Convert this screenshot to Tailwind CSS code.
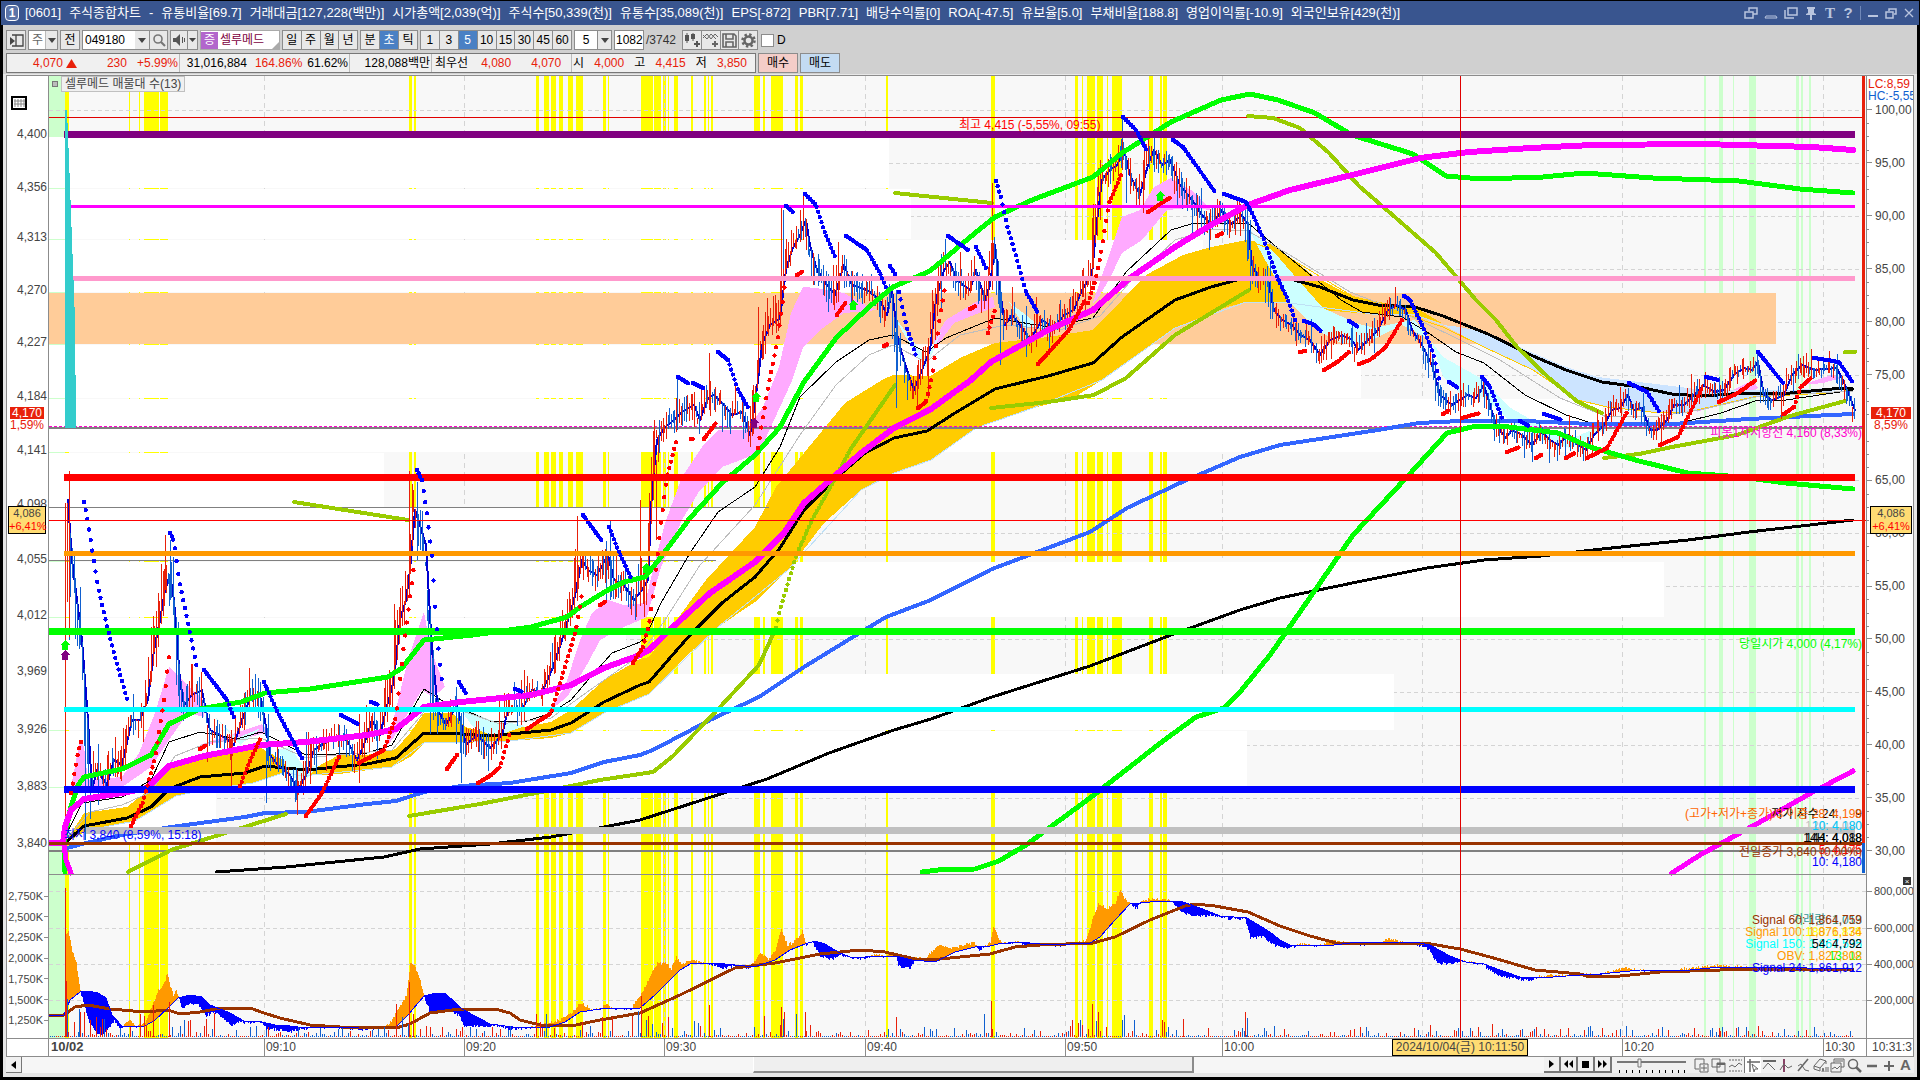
<!DOCTYPE html>
<html lang="ko">
<head>
    <meta charset="UTF-8">
    <meta name="viewport" content="width=device-width, initial-scale=1.0">
    <title>[0601] 주식종합차트</title>
    <script src="https://cdn.jsdelivr.net/npm/@tailwindcss/browser@4"></script>
</head>
<body class="bg-black h-screen overflow-hidden flex flex-col pt-px pr-px pb-[3px] text-[12px] leading-[14px] text-black font-['Liberation_Sans','Noto_Sans_CJK_KR',sans-serif]">

    <!-- Title bar -->
    <header class="h-6 shrink-0 bg-[#39558f] text-white flex items-center pl-1 pr-1 ml-px">
        <span class="w-[14px] h-4 border border-white rounded-sm font-bold text-center leading-[14px] bg-[#5b74a8]">1</span>
        <h1 class="pl-[6px] flex gap-2 text-[13px] whitespace-nowrap">
            <span>[0601]</span><span>주식종합차트</span><span>-</span><span>유통비율[69.7]</span><span>거래대금[127,228(백만)]</span><span>시가총액[2,039(억)]</span><span>주식수[50,339(천)]</span><span>유통수[35,089(천)]</span><span>EPS[-872]</span><span>PBR[7.71]</span><span>배당수익률[0]</span><span>ROA[-47.5]</span><span>유보율[5.0]</span><span>부채비율[188.8]</span><span>영업이익률[-10.9]</span><span>외국인보유[429(천)]</span>
        </h1>
        <div class="ml-auto flex items-center gap-[6px] text-[#b9c5df]">
            <button aria-label="새 창"><svg width="14" height="14" fill="none" stroke="currentColor" stroke-width="1.5"><path d="M5 5V2h8v6H9M1 6h8v6H1z"/></svg></button>
            <button aria-label="내리기"><svg width="14" height="14" fill="none" stroke="currentColor"><path d="M2 10h10l1 2H1z"/></svg></button>
            <button aria-label="복사"><svg width="14" height="14" fill="none" stroke="currentColor" stroke-width="1.5"><path d="M4 2h9v7H4zM1 4v8h9"/></svg></button>
            <button aria-label="고정"><svg width="14" height="14" fill="currentColor"><path d="M3 1h8v2h-1v4l2 1v1H8v5H6V9H2V8l2-1V3H3z"/></svg></button>
            <button aria-label="글꼴" class="font-bold text-[15px] w-3 font-['Liberation_Serif',serif]">T</button>
            <button aria-label="도움말" class="font-bold text-[15px] w-3">?</button>
            <span class="w-px h-[14px] bg-[#7088b8]"></span>
            <button aria-label="최소화"><svg width="12" height="14" fill="currentColor"><path d="M1 9h10v2H1z"/></svg></button>
            <button aria-label="이전 크기"><svg width="12" height="14" fill="none" stroke="currentColor" stroke-width="1.5"><path d="M4 5V3h7v5H9M1 6h7v6H1z"/></svg></button>
            <button aria-label="닫기"><svg width="12" height="14" fill="none" stroke="currentColor" stroke-width="1.3"><path d="M2 3l8 8M10 3l-8 8"/></svg></button>
        </div>
    </header>

    <div class="grow min-h-0 ml-[3px] mr-[2px] bg-[#e6e6e6] flex flex-col">
        <div class="bg-[#d0d0d0] pt-[5px] pb-px pl-[3px] flex flex-col gap-[3px] border-b border-[#e8e8e8]">
            <!-- Toolbar -->
            <div class="flex h-5 gap-[2px] items-stretch [&_button]:border-[#8c8c8c] [&_button]:text-center">
                <button aria-label="목록" class="w-5 border bg-[#e8e8e8] flex items-center justify-center"><svg width="15" height="15" fill="none" stroke="#444" stroke-width="1.3"><path d="M3 2h11v11H3M7 2v11"/><path d="M1 4l5 4-5 4z" fill="#444" stroke="none"/></svg></button>
                <button class="w-[30px] border bg-white flex items-center justify-between pl-[3px] text-[#666]">주<span class="w-3 h-full bg-[#e8e8e8] border-l border-[#bbb] flex items-center justify-center"><svg width="8" height="5" fill="#444"><path d="M0 0h8L4 5z"/></svg></span></button>
                <button class="w-5 border bg-[#e8e8e8]">전</button>
                <div class="flex border border-[#8c8c8c] w-[86px] bg-white">
                    <input aria-label="종목코드" value="049180" class="w-0 grow pl-[2px]">
                    <button aria-label="종목 목록" class="w-[14px] bg-[#e8e8e8] flex items-center justify-center"><svg width="8" height="5" fill="#444"><path d="M0 0h8L4 5z"/></svg></button>
                    <button aria-label="검색" class="w-[18px] border-l bg-[#e8e8e8] flex items-center justify-center"><svg width="14" height="14" fill="none" stroke="#777" stroke-width="1.6"><circle cx="6" cy="6" r="4"/><path d="M9 9l4 4" stroke-width="2.2"/></svg></button>
                </div>
                <div class="flex border border-[#8c8c8c] w-7 bg-[#e8e8e8]">
                    <button aria-label="소리" class="grow flex items-center justify-center"><svg width="15" height="14" fill="#555"><path d="M1 5h3l4-4v12L4 9H1z"/><path d="M10 4h1v6h-1zM12 5h1v4h-1z"/></svg></button>
                    <button aria-label="소리 설정" class="w-[10px] border-l flex items-center justify-center"><svg width="7" height="4" fill="#444"><path d="M0 0h7L3.500 4z"/></svg></button>
                </div>
                <div class="w-20 bg-white border border-[#aaa] flex items-center relative">
                    <span class="w-[17px] h-[17px] bg-[#b266cc] text-white text-center leading-[17px]">증</span>
                    <span class="pl-[2px] text-[#800040]">셀루메드</span>
                    <svg class="absolute right-0 bottom-0" width="7" height="7" fill="#aaa"><path d="M7 0v7H0z"/></svg>
                </div>
                <div class="flex border border-[#8c8c8c] divide-x divide-[#8c8c8c] bg-[#e8e8e8] w-[76px]"><button class="flex-1">일</button><button class="flex-1">주</button><button class="flex-1">월</button><button class="flex-1">년</button></div>
                <div class="flex border border-[#8c8c8c] divide-x divide-[#8c8c8c] bg-[#e8e8e8] w-[58px]"><button class="flex-1">분</button><button class="flex-1 bg-[#4a80c4] text-white">초</button><button class="flex-1">틱</button></div>
                <div class="flex border border-[#8c8c8c] divide-x divide-[#8c8c8c] bg-[#e8e8e8] w-[152px]"><button class="flex-1">1</button><button class="flex-1">3</button><button class="flex-1 bg-[#4a80c4] text-white">5</button><button class="flex-1">10</button><button class="flex-1">15</button><button class="flex-1">30</button><button class="flex-1">45</button><button class="flex-1">60</button></div>
                <div class="flex border border-[#8c8c8c] w-[38px] bg-white">
                    <input aria-label="간격" value="5" class="w-0 grow text-center">
                    <button aria-label="간격 목록" class="w-[14px] border-l bg-[#e8e8e8] flex items-center justify-center"><svg width="8" height="5" fill="#444"><path d="M0 0h8L4 5z"/></svg></button>
                </div>
                <input aria-label="봉 개수" value="1082" class="w-[30px] border border-[#8c8c8c] bg-white pl-px">
                <span class="w-[34px] leading-5 text-[#333]">/3742</span>
                <div class="flex border border-[#8c8c8c] divide-x divide-[#8c8c8c] bg-[#e8e8e8] w-[76px] [&_button]:flex [&_button]:items-center [&_button]:justify-center">
                    <button aria-label="봉 추가" class="flex-1"><svg class="shrink-0" width="16" height="16" fill="#555"><path d="M1 3h4v6H1zM2.500 1h1v10h-1zM7 2h4v5H7zM8.500 1h1v8h-1zM12 9h2v2h2v2h-2v2h-2v-2h-2v-2h2z"/></svg></button>
                    <button aria-label="지표 추가" class="flex-1"><svg class="shrink-0" width="16" height="16" fill="none" stroke="#666"><path d="M0 6l4-4 4 5 4-5 3 3M0 3l4 4 4-5 5 5"/><path d="M12 9v6M9 12h6" stroke-width="2"/></svg></button>
                    <button aria-label="저장" class="flex-1"><svg class="shrink-0" width="15" height="15" fill="none" stroke="#666" stroke-width="1.6"><path d="M1 1h11l2 2v11H1zM4 1v5h7V1M4 14V9h7v5"/></svg></button>
                    <button aria-label="설정" class="flex-1"><svg class="shrink-0" width="15" height="15" fill="none" stroke="#666"><circle cx="7.500" cy="7.500" r="4" stroke-width="2.500"/><circle cx="7.500" cy="7.500" r="6" stroke-width="2.500" stroke-dasharray="2.400 2.300"/></svg></button>
                </div>
                <label class="flex items-center gap-[3px] pl-px"><input type="checkbox" class="appearance-none size-[13px] bg-white border border-[#8c8c8c]">D</label>
            </div>
            <!-- Quote line -->
            <div class="flex h-5 gap-[2px] leading-[18px] whitespace-nowrap">
                <div class="w-[750px] border border-[#777] bg-[#f0f0f0] flex text-[#e8200a] divide-x divide-[#bbb]">
                    <div class="w-[173px] flex justify-end items-center gap-[10px] pr-px"><span class="flex items-center gap-[3px] pr-5">4,070<svg width="11" height="9" fill="#e8200a"><path d="M5.500 0L11 9H0z"/></svg></span><span>230</span><span>+5.99%</span></div>
                    <div class="w-[170px] flex justify-end gap-[5px] pr-px"><span class="text-black pr-[3px]">31,016,884</span><span>164.86%</span><span class="text-black">61.62%</span></div>
                    <div class="w-[82px] text-right text-black pr-px">128,088백만</div>
                    <div class="w-[140px] flex pl-[3px] gap-[13px]"><span class="text-black">최우선</span><span class="pr-[7px]">4,080</span><span>4,070</span></div>
                    <div class="grow flex justify-between pl-px pr-[8px]"><span class="text-black">시</span><span>4,000</span><span class="text-black">고</span><span>4,415</span><span class="text-black">저</span><span>3,850</span></div>
                </div>
                <button class="w-10 border border-[#8c8c8c] bg-[#f4cdc8]">매수</button>
                <button class="w-10 border border-[#8c8c8c] bg-[#c3dbf2]">매도</button>
            </div>
        </div>

        <!-- Chart -->
        <main class="grow min-h-0 ml-[3px] mr-[3px] bg-white border border-[#8c8c8c] text-[#444] grid grid-cols-[42px_1fr_47px] grid-rows-[1fr_18px]">
            <div id="leftAxis" class="relative border-r border-[#8c8c8c] overflow-hidden">
                <svg class="absolute left-1 top-5" width="16" height="14" fill="none" stroke="#333"><path d="M1 1h14v12H1z" stroke-width="2" stroke="#000"/><path d="M4 3v8M7 3v8M10 3v8M13 3v8M3 5h11M3 8h11" stroke="#888"/></svg>
            </div>
            <div id="plotBox" class="relative overflow-hidden">
                <svg id="plot" class="absolute inset-0 size-full" viewBox="49 76 1817 962" preserveAspectRatio="none" fill="none" shape-rendering="crispEdges"></svg>
                <div class="absolute left-[3px] top-0 flex items-center gap-[3px]"><span class="size-[6px] border border-[#777] bg-[#bbb]"></span><span class="border border-[#c0c0c0] bg-[#f0f0f0] px-[3px]">셀루메드 매물대 수(13)</span></div>
            </div>
            <div id="rightAxis" class="relative border-l border-[#8c8c8c] overflow-hidden whitespace-nowrap"></div>
            <div class="border-t border-r border-[#8c8c8c]"></div>
            <div id="timeAxis" class="relative border-t border-[#8c8c8c] leading-4"></div>
            <div class="border-t border-l border-[#8c8c8c] pl-[5px] leading-4 overflow-hidden whitespace-nowrap">10:31:3</div>
        </main>

        <!-- Scroll and drawing tools -->
        <footer class="h-4 mb-1 ml-[3px] mr-[3px] flex items-stretch bg-[#f0f0f0] [&_svg]:shrink-0">
            <button aria-label="왼쪽" class="w-4 bg-[#f0f0f0] border-r border-b border-[#777] flex items-center justify-center"><svg width="5" height="8"><path d="M5 0v8L0 4z"/></svg></button>
            <div class="grow flex bg-[#f6f6f6]"><div class="w-[48%]"></div><div class="w-[29%] bg-[#efefef] border-l border-l-white border-r-2 border-b-2 border-r-[#8c8c8c] border-b-[#8c8c8c]"></div></div>
            <div class="flex [&_button]:w-[17px] [&_button]:bg-[#f0f0f0] [&_button]:border-r-2 [&_button]:border-b-2 [&_button]:border-[#777] [&_button]:flex [&_button]:items-center [&_button]:justify-center">
                <button aria-label="재생"><svg width="5" height="8"><path d="M0 0v8l5-4z"/></svg></button>
                <button aria-label="뒤로"><svg width="9" height="8"><path d="M4 0v8L0 4zM9 0v8L5 4z"/></svg></button>
                <button aria-label="정지"><svg width="7" height="7"><path d="M0 0h7v7H0z"/></svg></button>
                <button aria-label="앞으로"><svg width="9" height="8"><path d="M0 0v8l4-4zM5 0v8l4-4z"/></svg></button>
            </div>
            <svg class="ml-[5px] mr-1" width="72" height="17" stroke="#777" fill="none"><path d="M0 5h69" stroke-width="2"/><path d="M21 2h3v8h-3z" fill="#eee"/><path d="M2.500 13v3M9.500 13v3M15.500 13v3M22.500 13v3M29.500 13v3M35.500 13v3M42.500 13v3M48.500 13v3M55.500 13v3M61.500 13v3M67.500 13v3" stroke="#000"/></svg>
            <div class="flex text-[#666] [&_button]:w-[17px] [&_button]:flex [&_button]:items-center [&_button]:justify-center [&_svg]:fill-none [&_svg]:stroke-current">
                <button aria-label="추가"><svg width="15" height="15"><path d="M1 1h9v5M1 1v10h4M6 6h8v8H6zM10 7v6M7 10h6"/></svg></button>
                <button aria-label="겹치기"><svg width="15" height="15"><path d="M1 1h8v8H1zM6 5h8v9H6z"/><path d="M6 6h8" stroke-width="2"/></svg></button>
                <button aria-label="범위"><svg width="15" height="15"><path d="M1 2h13M1 13h13" stroke-dasharray="2 1"/><path d="M1 9l3-2 3 2 4-4 3 2"/></svg></button>
                <button aria-label="십자선" class="bg-white border-l border-[#777]"><svg width="15" height="15"><path d="M1 4h13M4 1v13" stroke-width="1.5"/><path d="M6 6l6 5H9l-1 3z"/></svg></button>
                <button aria-label="가로선"><svg width="15" height="15"><path d="M1 3h13" stroke-width="2"/><path d="M1 11l5-6 3 3 4 4"/></svg></button>
                <button aria-label="세로선"><svg width="15" height="15"><path d="M5 1v13" stroke="#846" stroke-width="2"/><path d="M1 12l4-6 4 4 4-2"/></svg></button>
                <button aria-label="추세선"><svg width="15" height="15"><path d="M2 13L12 1" stroke-width="1.600"/><path d="M2 8l3-2 4 6 4 1"/></svg></button>
                <button aria-label="모두 지우기"><svg width="16" height="15"><path d="M1 8l6-7 6 2-6 7-6-2v3l6 2v-3M13 3v3M9 14l1-4 1 4M13 9v5M15 9v5"/></svg></button>
                <button aria-label="차트 복사"><svg width="15" height="15"><path d="M4 5V1h10v8h-3"/><path d="M1 5h10v9H1z"/><path d="M2 11l3-2 2 2 3-3M5 3h8"/></svg></button>
                <button aria-label="확대보기"><svg width="15" height="15"><circle cx="6" cy="6" r="4.500" stroke-width="1.500"/><path d="M9 9l5 5" stroke-width="2.500"/></svg></button>
                <button aria-label="축소"><svg width="12" height="15"><path d="M1 8h10" stroke-width="2.500"/></svg></button>
                <button aria-label="확대"><svg width="12" height="15"><path d="M1 8h10M6 3v10" stroke-width="2"/></svg></button>
                <button aria-label="자동" class="font-bold text-[15px]">A</button>
            </div>
        </footer>
    </div>

    <script>
        const X0 = 49, Y0 = 76, W = 1817, H = 962;
        const plot = document.getElementById('plot');
        const plotBox = document.getElementById('plotBox');
        const out = [];

        // fixed seed so the bars are the same on every load
        let seed = 7;
        function rnd() { seed = (seed * 16807) % 2147483647; return seed / 2147483647; }
        function pts(s) { return s.trim().split(' ').map(p => p.split(',').map(Number)); }
        function rect(x, y, w, h, c) { out.push(`<rect x="${x}" y="${y}" width="${w}" height="${h}" fill="${c}"/>`); }
        function hline(x1, x2, y, w, c, dash) { out.push(`<path d="M${x1} ${y}H${x2}" stroke="${c}" stroke-width="${w}" ${dash ? `stroke-dasharray="${dash}"` : ''}/>`); }
        function vline(x, y1, y2, w, c, dash) { out.push(`<path d="M${x} ${y1}V${y2}" stroke="${c}" stroke-width="${w}" ${dash ? `stroke-dasharray="${dash}"` : ''}/>`); }
        function line(s, w, c) { out.push(`<polyline points="${s}" stroke="${c}" stroke-width="${w}" stroke-linejoin="round" stroke-linecap="round"/>`); }
        function area(s, c) { out.push(`<polygon points="${s}" fill="${c}"/>`); }
        function at(p, x) {
            for (let i = 1; i < p.length; i++) {
                if (x <= p[i][0]) {
                    const [ax, ay] = p[i - 1], [bx, by] = p[i];
                    return ay + (by - ay) * (x - ax) / (bx - ax || 1);
                }
            }
            return p[p.length - 1][1];
        }
        // one dot for each bar
        function dots(list, c) {
            for (const s of list.split('|')) {
                const p = pts(s);
                for (let x = p[0][0]; x <= p[p.length - 1][0]; x += 1.65) out.push(`<circle cx="${x.toFixed(1)}" cy="${at(p, x).toFixed(1)}" r="2.2" fill="${c}"/>`);
            }
        }

        // background
        rect(X0, Y0, W, H, '#f8f8f8');
        rect(49, 76, 16, H, '#ccffcc');
        const yellow = [[65,4],[129,1],[139,1],[144,15],[160,8],[409,3],[414,2],[536,3],[544,5],[551,5],[559,4],[568,5],[576,7],[603,3],[608,1],[641,12],[654,7],[663,3],[668,1],[674,4],[691,2],[704,2],[708,1],[711,2],[754,6],[763,2],[771,12],[795,3],[800,3],[886,2],[991,4],[1075,3],[1082,1],[1087,8],[1097,6],[1107,1],[1112,10],[1149,4],[1160,2],[1163,4]];
        for (const [x, w] of yellow) rect(x, 76, w, H, '#ffff00');
        for (const [x, w] of [[1704,2],[1719,4],[1733,1],[1749,7],[1796,3],[1801,2],[1809,2]]) rect(x, 76, w, H, '#ccffcc');
        for (let i = 0; i < 15; i++) hline(49, 1863, Math.round(110 + i * 52.9) + .5, 1, '#d4d4d4', '4 3');
        for (const y of [891, 928, 964, 1000]) hline(49, 1866, y + .5, 1, '#d4d4d4', '4 3');
        for (const x of [264, 464, 664, 865, 1065, 1222, 1422, 1622, 1823]) vline(x + .5, 76, 1038, 1, '#d4d4d4', '5 4');
        // volume by price
        const blocks = [[137,51,889],[189,50,911],[240,52,1203],[345,53,1361],[399,53,1602],[453,54,384],[508,53,794],[562,55,1664],[618,56,626],[674,56,1394],[731,56,1247],[788,55,216]];
        for (const [y, h, x] of blocks) rect(49, y, x - 49, h, '#fff');
        rect(49, 293, 1727, 51, '#ffcc99');
        hline(49, 1863, 117.5, 1, '#e00000');

        // clouds
        area('65,843 84,813 127,807 151,788 169,766 204,756 261,748 286,762 302,775 339,755 367,755 396,749 410,733 424,713 453,713 465,727 490,733 551,722 571,710 604,680 640,659 649,657 673,625 706,580 755,527 776,487 804,453 845,403 882,380 893,375 930,376 962,357 995,343 1048,337 1093,330 1122,300 1146,275 1183,255 1211,247 1247,240 1274,245 1315,277 1352,296 1384,303 1415,307 1443,324 1413,314 1380,315 1323,310 1282,302 1246,302 1224,308 1175,328 1122,365 1102,380 1073,398 1033,408 976,428 931,460 894,473 861,490 824,523 788,570 755,602 718,627 682,660 649,694 604,713 571,733 551,738 510,741 461,743 424,743 410,757 392,767 339,774 302,776 286,772 253,783 204,790 176,796 159,807 135,821 88,830', '#ffcc00');
        const pink = ['71,787 80,740 84,747 88,780 122,777 139,753 155,713 169,667 180,677 192,690 204,700 204,717 188,713 169,740 151,767 122,787 90,790', '384,750 394,717 408,660 424,612 431,650 445,687 433,697 422,690 408,713 394,737', '547,713 565,687 580,640 592,613 608,600 624,605 645,603 653,570 665,523 682,477 702,447 718,430 747,430 763,407 779,367 791,313 803,287 816,288 844,293 869,307 877,310 844,313 820,330 803,348 791,383 780,407 759,453 722,467 698,493 682,520 661,567 647,617 624,627 600,640 588,663 567,697', '934,340 946,320 979,300 993,297 995,307 979,313 954,323 934,350', '1093,303 1105,267 1122,217 1140,210 1154,187 1171,178 1191,190 1211,210 1190,208 1167,210 1142,240 1122,253 1109,280 1097,300', '1696,412 1713,400 1753,380 1758,388 1729,403', '1802,385 1831,375 1841,378 1823,383', '200,745 262,724 268,732 240,740'];
        for (const s of pink) area(s, '#ffaaff');
        const cyan = ['216,718 237,738 261,728 240,745', '278,750 290,747 304,767 318,765 304,782 290,776', '457,705 490,720 510,723 525,726 494,737 473,727', '893,315 926,358 942,330 926,368 916,355', '1009,302 1036,323 1045,328 1025,328', '1248,228 1274,252 1299,281 1323,308 1356,323 1374,328 1402,322 1415,320 1443,357 1484,380 1509,407 1549,430 1566,440 1580,435 1610,422 1600,432 1570,448 1540,440 1509,420 1484,397 1460,393 1443,377 1431,340 1402,325 1366,343 1341,343 1317,330 1288,300 1264,258'];
        for (const s of cyan) area(s, '#ccffff');
        area('1443,325 1460,327 1488,333 1533,353 1566,367 1598,377 1664,385 1704,390 1745,390 1790,390 1847,387 1827,393 1753,397 1688,412 1660,413 1607,407 1578,400 1533,370 1484,347', '#cce4ff');
        line('1248,241 1280,252 1352,296 1443,327 1484,347 1533,370 1578,400 1607,407 1660,413 1688,412 1753,397 1827,393 1853,390', 1, '#ffcc00');
        line('88,830 135,821 176,796 204,790 253,783 286,772 302,776 392,767 424,743 510,741 571,733 604,713 649,694 718,627 788,570 861,490 894,473 931,460 976,428 1033,408 1102,380 1175,328 1246,302 1282,302 1380,315 1413,314 1443,325', 1, '#bfe0f5');

        // horizontal levels
        hline(49, 1863, 428, 2, '#808080');
        hline(49, 1863, 426.5, 1, '#ff00cc', '3 2');
        hline(49, 769, 507.5, 1, '#808080');
        hline(49, 716, 560.5, 1, '#808080');
        hline(49, 1863, 851, 2, '#808080');

        // long moving averages
        line('67,833 82,803 122,797 151,780 169,742 200,732 237,739 261,732 306,755 367,753 392,745 424,689 441,700 490,721 527,721 551,713 571,700 588,680 612,653 640,642 645,638 661,603 690,553 718,512 755,487 780,447 800,397 836,362 869,340 893,335 926,352 946,338 995,318 1048,327 1093,318 1126,272 1171,230 1191,224 1248,223 1280,250 1341,300 1362,312 1402,317 1427,332 1456,352 1484,363 1525,395 1566,415 1598,425 1639,422 1676,424 1721,413 1758,400 1786,400 1853,390', 1, '#000');
        line('67,838 90,812 122,805 151,792 175,756 210,742 261,738 306,758 392,750 430,705 465,712 500,724 551,718 590,690 640,655 665,620 700,565 755,505 800,435 836,385 869,355 893,345 926,362 960,335 1005,325 1060,330 1100,316 1130,282 1175,240 1211,229 1248,231 1290,255 1350,292 1402,312 1456,338 1500,360 1560,398 1607,417 1660,416 1700,410 1760,396 1853,391', 1, '#bdbdbd');
        line('65,843 84,826 127,818 151,807 169,789 200,777 245,773 265,766 306,770 367,764 396,758 424,733 461,734 490,736 551,730 571,723 604,702 640,685 649,682 690,635 722,603 755,577 780,548 804,510 837,477 865,453 894,438 927,431 955,413 995,389 1048,376 1093,363 1122,337 1175,300 1211,287 1248,277 1290,279 1320,287 1353,300 1378,305 1415,307 1443,316 1488,334 1533,356 1566,370 1602,382 1639,387 1672,394 1704,396 1745,393 1790,393 1843,388 1853,389', 3, '#000');
        line('67,848 86,843 122,835 171,827 245,817 265,813 306,812 367,804 396,801 424,792 461,786 510,783 571,773 604,762 640,755 653,750 710,720 759,697 804,667 853,637 886,617 931,600 992,569 1024,557 1090,532 1127,508 1180,483 1240,457 1280,445 1378,430 1419,423 1460,421 1525,421 1590,424 1672,424 1749,419 1811,416 1853,414', 4, '#3366ff');
        line('216,872 286,867 384,857 420,849 490,844 551,837 604,827 640,820 702,800 767,779 829,753 894,730 931,719 992,697 1090,666 1171,635 1240,610 1280,598 1362,581 1427,568 1484,560 1541,556 1602,549 1688,540 1749,532 1853,520', 3, '#000');
        const olive = ['128,872 171,850 286,814', '294,502 408,520', '409,816 480,804 541,792 600,780 653,772 673,756 720,707 759,665 776,628', '850,450 895,385', '895,193 992,203', '991,408 1048,402 1094,395 1126,378 1175,335 1249,290', '1248,116 1273,118 1300,128 1329,153 1359,186 1396,218 1436,253 1476,300 1496,320 1517,347 1549,378 1578,402 1602,413', '1604,458 1639,454 1672,447 1737,435 1790,416 1845,401', '1845,352 1855,352'];
        for (const s of olive) line(s, 4, '#99cc00');
        dots('776,628 780,610 796,556 812,520 837,475 850,450', '#99cc00');

        // candles
        const price = pts('65,840 66,500 70,560 75,600 80,640 86,720 90,790 95,770 105,785 112,760 120,765 130,720 138,720 146,700 152,650 158,620 163,590 168,575 172,600 178,680 182,705 190,695 200,690 208,730 218,735 226,740 232,745 240,720 248,698 258,695 263,720 268,755 276,765 288,775 296,790 304,775 312,750 330,738 345,740 355,760 362,745 370,720 378,735 384,710 392,680 398,620 404,600 408,570 413,510 418,525 424,545 430,650 436,710 444,725 455,705 464,745 475,735 488,748 500,735 506,710 520,710 530,690 540,692 550,670 560,640 566,620 572,600 580,560 586,570 595,575 606,555 612,580 622,585 632,600 640,590 646,580 650,490 655,440 662,428 672,420 680,412 692,405 698,420 706,398 712,395 722,405 730,415 740,412 748,435 752,410 756,380 760,345 768,325 778,318 784,270 790,250 798,235 804,220 808,245 815,270 825,285 833,295 842,265 850,285 865,290 878,300 885,315 890,290 896,340 905,370 912,390 920,370 928,350 934,300 942,270 948,262 955,280 968,290 974,270 983,300 988,285 993,245 998,290 1003,325 1010,315 1018,325 1028,340 1040,320 1052,328 1062,315 1072,310 1080,290 1090,275 1094,230 1100,180 1108,170 1115,165 1122,150 1128,175 1138,195 1146,165 1152,150 1160,165 1168,160 1178,185 1190,200 1200,215 1210,225 1220,210 1228,225 1240,215 1246,225 1250,265 1258,280 1266,280 1272,310 1280,320 1290,325 1298,335 1308,340 1318,355 1328,340 1340,335 1350,340 1356,350 1366,340 1376,330 1386,310 1395,305 1404,310 1410,330 1420,345 1430,365 1438,395 1450,405 1458,400 1466,395 1474,398 1482,385 1488,405 1494,425 1504,438 1510,430 1520,435 1530,445 1540,432 1548,440 1556,445 1566,435 1576,445 1584,450 1592,435 1602,425 1610,410 1618,408 1626,395 1632,410 1640,408 1648,430 1655,430 1665,420 1672,405 1682,405 1692,395 1702,385 1712,392 1722,390 1732,375 1742,368 1750,370 1756,362 1762,395 1770,400 1782,395 1790,375 1800,365 1812,370 1835,368 1843,385 1853,410');
        line(price.slice(1).map(p => `${p[0] + 2},${p[1]}`).join(' '), 2, '#0000d0');
        let red = '', blue = '';
        for (let x = 67; x < 1854; x += 1.65) {
            const y = at(price, x), slope = at(price, x + 4) - at(price, x - 4);
            const amp = (x < 1250 ? 13 : 9) + Math.abs(slope) * .25;
            const a = y - amp * rnd() * (rnd() > .85 ? 2.2 : 1.2), b = y + amp * rnd() * (rnd() > .85 ? 2.2 : 1.2);
            const d = `M${Math.round(x) + .5} ${a.toFixed(0)}V${b.toFixed(0)}`;
            if (rnd() + slope / 60 < .55) red += d; else blue += d;
        }
        red += 'M65.500 503V840M67.500 503V600M165.500 535V590M409.500 471V560M412.500 484V540M577.500 516V570M992.500 183V290M656.500 460V540M709.500 353V410M781.500 207V300M803.500 195V240M1100.500 160V220M1122.500 140V170M640.500 500V600M297.500 770V815M231.500 730V788';
        blue += 'M69.500 535V640M170.500 540V600M417.500 500V560M610.500 520V600M1122.500 117V160M783.500 210V290M606.500 541V600M266.500 740V803M896.500 290V408M1000.500 280V365M1250.500 220V290M85.500 700V840M461.500 730V783M677.500 378V430';
        out.push(`<path d="${blue}" stroke="#1060d0"/><path d="${red}" stroke="#e8200a"/>`);

        // thick averages
        line('65,872 64,843 70,810 78,785 84,777 122,769 151,755 169,724 200,709 241,702 265,693 310,689 388,677 402,668 424,640 473,635 531,627 567,617 580,607 608,590 624,582 645,577 661,557 690,518 722,483 755,455 780,427 804,382 836,338 869,307 893,287 930,271 975,233 995,217 1032,200 1093,177 1122,153 1171,122 1221,100 1250,94 1278,100 1315,113 1352,135 1413,154 1446,176 1482,179 1543,177 1584,173 1653,178 1739,181 1800,189 1853,193', 5, '#00ff00');
        line('922,872 938,870 975,869 999,861 1026,845 1090,798 1163,741 1196,717 1224,708 1240,692 1270,655 1309,599 1353,535 1407,477 1447,433 1476,426 1509,427 1558,433 1590,447 1639,461 1688,473 1741,477 1786,483 1853,489', 5, '#00ff00');
        line('49,843 63,843 65,827 71,810 84,799 122,793 147,788 169,766 204,756 261,745 306,742 367,735 396,729 424,707 461,702 531,695 571,685 604,668 640,655 649,650 673,627 710,593 755,562 784,533 804,503 861,453 894,428 931,409 971,380 991,362 1048,330 1093,310 1130,278 1175,247 1211,225 1248,205 1290,190 1352,175 1420,158 1469,152 1531,148 1592,145 1702,144 1812,147 1853,150', 6, '#ff00ff');
        line('64,845 66,860 71,873', 5, '#ff00ff');
        line('1672,873 1700,855 1760,822 1811,793 1853,771', 5, '#ff00ff');

        const levels = [[64,134,7,'#800080'],[66,206,3,'#ff00ff'],[66,278,5,'#ff99cc'],[64,477,7,'#ff0000'],[64,553,5,'#ff9900'],[49,631,7,'#00ff00'],[64,709,5,'#00ffff'],[64,789,7,'#0000ff'],[86,830,7,'#c0c0c0']];
        for (const [x, y, w, c] of levels) hline(x, 1855, y + .5, w, c);
        hline(49, 1863, 843.5, 3, '#993300');
        area('65,110 67,110 69,160 72,240 75,320 76,428 65,428', '#33cccc');

        dots('84,502 87,517 92,549 98,587 107,626 114,653 127,699|170,533 174,541 179,580 188,623 198,673|204,670 227,700 234,718|264,682 278,713 302,758|341,715 358,724|371,702 379,705|417,470 422,480 427,514 432,557 436,620 439,655 443,690|459,682 467,695|515,689 523,692|583,515 602,541|609,527 619,552 632,580|678,377 689,384|693,383 703,388|718,352 728,360 738,390 749,409|786,206 793,212|805,194 816,205 824,230 835,257|846,236 867,250 881,275 886,288|890,266 895,274|899,292 907,328 916,356|948,236 968,250|976,247 986,268|996,181 1001,197 1007,225 1018,263 1026,292 1038,313|1123,117 1136,130 1147,151|1173,140 1183,147 1215,192|1224,194 1246,202 1252,213 1264,240 1277,277 1288,300 1296,323|1304,321 1313,324 1322,332|1349,321 1358,327|1404,296 1410,300 1423,327 1433,353 1439,380|1449,382 1458,388|1482,377 1490,387 1502,418|1520,421 1529,426|1544,414 1562,420|1629,383 1647,392 1660,413|1706,377 1719,380|1758,352 1783,383|1814,358 1839,362 1853,383', '#0000ff');
        dots('71,793 78,753 82,738|131,826 143,802 155,758 164,700 169,657|200,749 206,745|240,786 249,763 261,737|306,816 322,793 339,757|359,763 384,750 396,717 404,645 414,566|447,769 457,755|478,783 490,776 500,767 510,733|527,729 551,713 565,667 576,630 583,587|600,605 606,601|633,663 643,647 649,625 655,580 661,523 667,477 676,442|691,439 693,439|704,439 716,423|758,448 763,417 768,388 777,343 783,300 786,273|797,275 803,271|837,315 846,302|884,346 888,344|918,408 926,402 932,377 940,317 945,287|970,309 976,306|988,333 995,310|1038,364 1069,330 1085,300|1088,303 1095,282 1101,253 1109,203 1122,173|1148,212 1171,197|1217,236 1223,233|1300,352 1305,351|1324,370 1336,363 1349,352|1359,364 1370,360 1385,348 1402,320|1443,414 1449,410|1462,418 1480,413|1507,452 1520,447|1536,458 1541,455|1566,458 1575,453|1587,458 1607,448 1617,430 1627,412|1660,445 1678,437 1688,417 1702,388|1719,402 1738,393 1756,380|1784,414 1794,407 1800,388 1811,378', '#ff0000');
        for (const [x, y, c] of [[65,640,'#00ff00'],[65,650,'#800080'],[646,563,'#00ff00'],[756,392,'#00ff00'],[754,418,'#800080'],[853,300,'#00ff00'],[1160,191,'#00ff00']]) out.push(`<path d="M${x - 5} ${y + 5}l5 -5l5 5h-2v5h-6v-5z" fill="${c}"/>`);

        // OBV pane
        rect(49, 874, W, 1, '#8c8c8c');
        const obv = pts('65,1015 66,935 68,930 72,950 76,962 80,990 84,1005 88,1020 94,1030 100,1035 104,1033 110,1025 114,1020 120,1030 126,1022 130,1018 136,1027 146,1020 152,1005 158,990 164,982 167,973 170,985 173,995 176,990 182,1008 190,1003 198,1005 206,1015 215,1012 222,1016 230,1025 240,1022 262,1022 266,1028 290,1031 306,1028 330,1026 360,1029 380,1027 390,1022 400,1005 406,995 410,962 414,965 420,980 425,1000 430,1012 440,1012 450,1010 460,1016 463,1026 480,1026 496,1025 510,1029 530,1027 550,1022 562,1018 572,1012 580,1002 590,1008 600,1009 606,1003 612,1008 630,1009 640,995 648,980 652,970 657,963 665,962 671,968 676,957 682,964 692,959 700,962 712,964 722,968 735,965 748,968 755,960 760,952 768,958 775,950 781,928 787,945 795,940 802,931 806,944 812,942 820,955 830,959 840,955 850,957 864,958 875,954 885,956 890,951 896,957 898,966 910,967 915,958 925,958 934,948 940,945 950,948 962,945 974,942 979,950 990,942 993,926 998,937 1002,943 1018,942 1024,945 1040,944 1060,945 1085,941 1092,920 1098,902 1106,908 1115,903 1120,889 1124,898 1130,903 1136,908 1142,900 1152,898 1170,900 1184,913 1200,916 1215,915 1230,918 1245,918 1250,938 1262,936 1275,945 1290,948 1300,943 1315,946 1335,940 1360,944 1380,943 1388,938 1400,941 1415,944 1428,948 1436,962 1452,964 1460,960 1482,964 1490,970 1500,976 1515,978 1530,980 1540,976 1560,974 1600,974 1624,967 1640,970 1665,971 1694,967 1720,965 1760,968 1790,969 1820,968 1853,970');
        const sigText = '49,1015 64,1015 70,1000 80,992 88,991 98,993 106,998 112,1015 122,1026 145,1026 155,1020 168,1008 178,998 190,995 202,997 210,1005 230,1013 244,1021 262,1022 275,1025 290,1026 306,1028 360,1027 396,1027 408,1015 424,996 436,993 446,994 462,1009 490,1024 520,1028 550,1027 565,1022 580,1012 600,1009 612,1008 640,1008 655,995 680,970 692,963 715,963 735,965 754,967 775,960 790,950 805,944 815,941 825,944 840,953 850,957 865,957 896,956 912,960 935,962 955,952 975,947 990,946 998,944 1018,942 1030,943 1050,945 1090,943 1100,937 1115,920 1130,904 1150,902 1180,901 1200,908 1220,916 1247,918 1270,932 1280,940 1290,945 1326,946 1350,943 1400,942 1420,943 1430,945 1450,956 1466,962 1484,964 1500,970 1520,977 1540,978 1580,975 1600,974 1640,970 1680,971 1720,967 1760,967 1853,969';
        const sig = pts(sigText);
        let up = '', down = '';
        for (let x = 65; x < 1854; x++) {
            const a = at(obv, x) + rnd() * 3 - 1, b = at(sig, x);
            const d = `M${x + .5} ${a.toFixed(1)}V${b.toFixed(1)}`;
            if (a < b) up += d; else down += d;
        }
        out.push(`<path d="${up}" stroke="#ff9900"/><path d="${down}" stroke="#0000ff"/>`);
        line('49,1015 64,1015 75,1007 88,1005 110,1009 145,1012 168,1010 180,1014 200,1012 220,1008 250,1008 264,1013 280,1018 310,1025 340,1027 396,1028 410,1024 430,1013 460,1009 495,1009 510,1013 520,1020 540,1025 571,1026 600,1020 640,1013 680,995 735,968 775,963 820,954 860,950 885,952 915,959 940,959 990,954 1015,947 1040,945 1093,943 1115,937 1150,920 1185,906 1195,904 1215,906 1248,912 1280,926 1310,936 1340,944 1425,943 1460,949 1490,957 1535,970 1580,974 1590,977 1620,976 1660,972 1720,970 1760,969 1853,969', 3, '#993300');
        line(sigText, 1, '#0000ff');
        // volume
        let vr = '', vb = '';
        for (let x = 50; x < 1854; x += 2) {
            const busy = yellow.some(([a, w]) => x > a - 12 && x < a + w + 12) || x < 220;
            const h = x < 65 ? 1 : 1 + Math.pow(rnd(), 5) * (busy ? 26 : 10);
            const d = `M${x + .5} 1037V${(1037 - h).toFixed(0)}`;
            if (rnd() < .5) vr += d; else vb += d;
        }
        vr += 'M65.500 1037V888M66.500 1037V981M409.500 1037V982M396.500 1037V1004M413.500 1037V1014M153.500 1037V1005M169.500 1037V1002M84.500 1037V1012M641.500 1037V996M709.500 1037V1005M781.500 1037V1007M805.500 1037V1012M896.500 1037V1017M991.500 1037V1001M1092.500 1037V1004M1098.500 1037V1012M1245.500 1037V1012M1183.500 1037V1019M1430.500 1037V1025M1492.500 1037V1024M1719.500 1037V1028M1758.500 1037V1026M1536.500 1037V1027';
        vb += 'M67.500 1037V999M79.500 1037V1009M1247.500 1037V1018M783.500 1037V1019M1134.500 1037V1020';
        out.push(`<path d="${vb}" stroke="#1060d0"/><path d="${vr}" stroke="#e8200a"/>`);

        // crosshair and right edge
        hline(49, 1866, 520.5, 1, '#ff0000');
        vline(1460.5, 76, 1038, 1, '#e00000');
        vline(1863.5, 76, 843, 3, '#e8200a');
        vline(1863.5, 843, 873, 3, '#1060d0');
        plot.innerHTML = out.join('');

        // labels
        function pct(y) { return ((y - Y0) / H * 100).toFixed(2) + '%'; }
        function px(x) { return ((x - X0) / W * 100).toFixed(2) + '%'; }
        let left = '', right = '', time = '', notes = '';
        [[4400,134],[4356,187],[4313,237],[4270,290],[4227,342],[4184,396],[4141,450],[4098,504],[4055,559],[4012,615],[3969,671],[3926,729],[3883,786],[3840,843]].forEach(([v, y]) => {
            left += `<span class="absolute right-[1px] -translate-y-1/2" style="top:${pct(y)}">${v.toLocaleString('en')}</span>`;
        });
        ['2,750K', '2,500K', '2,250K', '2,000K', '1,750K', '1,500K', '1,250K'].forEach((v, i) => {
            left += `<span class="absolute right-0 -translate-y-1/2 flex items-center gap-px whitespace-nowrap text-[11px]" style="top:${pct(896 + i * 20.7)}">${v}<i class="w-1 h-px bg-[#8c8c8c]"></i></span>`;
        });
        left += `<span class="absolute left-[3px] w-[34px] text-center bg-[#e8200a] text-white -translate-y-1/2 leading-3" style="top:${pct(413.5)}">4,170</span>
            <span class="absolute left-[3px] text-[#e8200a] -translate-y-1/2" style="top:${pct(425)}">1,59%</span>
            <span class="absolute left-px w-[38px] border border-black bg-[#ffdc73] text-center leading-[13px] text-[11px] -translate-y-1/2" style="top:${pct(520)}">4,086<br><b class="font-normal text-[#ff0000]">+6,41%</b></span>`;
        document.getElementById('leftAxis').innerHTML += left;

        for (let i = 0; i < 15; i++) {
            const y = 110 + i * 52.9;
            // the 70,00 label is under the current price tag
            if (i !== 6) right += `<span class="absolute left-0 flex items-center gap-[3px] -translate-y-1/2" style="top:${pct(y)}"><i class="w-[5px] h-px bg-[#8c8c8c]"></i>${100 - i * 5},00</span>`;
            for (let k = 1; k < 4 && i < 14; k++) right += `<i class="absolute left-0 w-[2px] h-px bg-[#8c8c8c]" style="top:${pct(y + k * 13.2)}"></i>`;
        }
        [[800,891],[600,928],[400,964],[200,1000]].forEach(([v, y]) => {
            right += `<span class="absolute left-0 flex items-center gap-[2px] -translate-y-1/2 text-[11px]" style="top:${pct(y)}"><i class="w-[5px] h-px bg-[#8c8c8c]"></i>${v},000</span>`;
        });
        right += `<span class="absolute left-px text-[#e8200a] -translate-y-1/2 leading-3" style="top:${pct(84)}">LC:8,59</span>
            <span class="absolute left-px text-[#1060d0] -translate-y-1/2 leading-3" style="top:${pct(96)}">HC:-5,55</span>
            <span class="absolute left-1 w-10 text-center bg-[#e8200a] text-white -translate-y-1/2 leading-3" style="top:${pct(413.5)}">4,170</span>
            <span class="absolute left-[7px] text-[#e8200a] -translate-y-1/2" style="top:${pct(425)}">8,59%</span>
            <span class="absolute left-[3px] w-[42px] border border-black bg-[#ffdc73] text-center leading-[13px] text-[11px] -translate-y-1/2" style="top:${pct(520)}">4,086<br><b class="font-normal text-[#ff0000]">+6,41%</b></span>
            <button aria-label="지표 닫기" class="absolute right-[2px] size-2 bg-[#333] text-white text-[8px] leading-[7px] -translate-y-1/2" style="top:${pct(881)}">×</button>`;
        document.getElementById('rightAxis').innerHTML = right;

        [['09:10',264],['09:20',464],['09:30',664],['09:40',865],['09:50',1065],['10:00',1222],['10:20',1622],['10:30',1823]].forEach(([t, x]) => {
            time += `<span class="absolute top-0 h-full border-l border-[#8c8c8c] pl-px" style="left:${px(x)}">${t}</span>`;
        });
        time += `<b class="absolute left-[2px] top-0 text-[13px]">10/02</b><span class="absolute top-0 h-full w-[136px] border border-black bg-[#ffdc73] text-center leading-[14px] whitespace-nowrap" style="left:${px(1392)}">2024/10/04(금) 10:11:50</span>`;
        document.getElementById('timeAxis').innerHTML = time;

        function note(y, color, text) { notes += `<span class="absolute right-[4px] -translate-y-1/2 whitespace-nowrap" style="top:${pct(y)};color:${color}">${text}</span>`; }
        note(433, '#ff00cc', '피봇1차저항선 4,160 (8,33%)');
        note(644, '#00ff00', '당일시가 4,000 (4,17%)');
        note(814, '#000', '저가 지수 24: &nbsp;&nbsp;&nbsp;&nbsp;9');
        note(814, '#ff6600', '(고가+저가+종가)/3 이중 28: 4,198');
        note(826, '#c0c0c0', '120: 4,080');
        note(826, '#00ccff', '10: 4,180');
        note(838, '#000', '144: 4,088');
        note(838, '#000', '14H: 4,018');
        note(850, '#ff0000', '5: 4,175');
        note(852, '#993300', '전일종가 3,840 (0,00%)');
        note(862, '#0000ff', '10: 4,180');
        note(920, '#339999', '거래량: 1,013');
        note(920, '#993300', 'Signal 60: 1,864,759');
        note(932, '#ffff00', '180: 1,876');
        note(932, '#ff9900', 'Signal 100: 1,876,134');
        note(944, '#00ffff', 'Signal 150: 1,867,535');
        note(944, '#000', '54: 4,792');
        note(956, '#00ff00', '13: 12');
        note(956, '#ff9900', 'OBV: 1,827,808');
        note(968, '#0000ff', 'Signal 24: 1,861,912');
        notes += `<span class="absolute -translate-y-1/2 whitespace-nowrap text-[#ff0000]" style="left:${px(959)};top:${pct(125)}">최고 4,415 (-5,55%, 09:55)</span>
            <span class="absolute -translate-y-1/2 whitespace-nowrap text-[#0000ff]" style="left:${px(64)};top:${pct(835)}">최저 3,840 (8,59%, 15:18)</span>`;
        plotBox.insertAdjacentHTML('beforeend', notes);
    </script>
</body>
</html>
